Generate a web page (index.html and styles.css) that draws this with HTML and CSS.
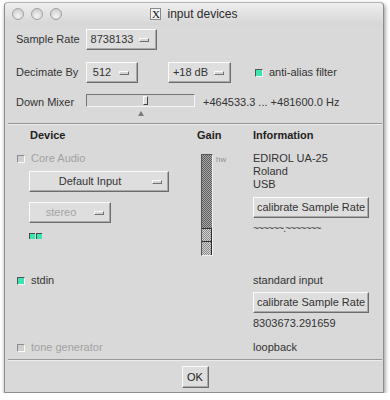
FILE: index.html
```html
<!DOCTYPE html>
<html>
<head>
<meta charset="utf-8">
<title>input devices</title>
<link rel="stylesheet" href="styles.css">
</head>
<body>
<div class="window">
  <div class="titlebar">
    <div class="lights"><span class="light"></span><span class="light"></span><span class="light"></span></div>
    <div class="title"><span class="x-icon">X</span><span>input devices</span></div>
    <div></div>
  </div>
  <div class="content">
    <div class="settings">
      <div class="row">
        <span class="label">Sample Rate</span>
        <div class="mb w-rate"><span class="mb-text">8738133</span><span class="ind"></span></div>
      </div>
      <div class="row row-gap">
        <span class="label">Decimate By</span>
        <div class="mb w-dec"><span class="mb-text">512</span><span class="ind"></span></div>
        <div class="mb w-db"><span class="mb-text">+18 dB</span><span class="ind"></span></div>
        <div class="check aa"><span class="box on"></span><span class="check-label">anti-alias filter</span></div>
      </div>
      <div class="row row-mixer">
        <span class="label lbl-mixer">Down Mixer</span>
        <div class="hslider">
          <div class="track"><span class="hthumb"></span></div>
          <span class="tri"></span>
        </div>
        <span class="hz">+464533.3 ... +481600.0 Hz</span>
      </div>
    </div>
    <div class="sep sep-top"></div>
    <div class="devices">
      <div class="device head">
        <span class="h h-device">Device</span>
        <span class="h">Gain</span>
        <span class="h">Information</span>
      </div>
      <div class="device dev1">
        <div class="col-left">
          <div class="check"><span class="box dis"></span><span class="check-label disabled">Core Audio</span></div>
          <div class="mb w-input"><span class="mb-text">Default Input</span><span class="ind"></span></div>
          <div class="mb w-stereo disabled-mb"><span class="mb-text">stereo</span><span class="ind"></span></div>
          <div class="meters"><span class="meter"></span><span class="meter"></span></div>
        </div>
        <div class="col-gain">
          <div class="vtrough"><div class="vfill"></div><div class="vthumb"></div></div>
          <span class="hw">hw</span>
        </div>
        <div class="col-info">
          <div class="line">EDIROL UA-25</div>
          <div class="line">Roland</div>
          <div class="line">USB</div>
          <div class="btn calib">calibrate Sample Rate</div>
          <div class="line tilde">~~~~~~.~~~~~~~</div>
        </div>
      </div>
      <div class="device dev2">
        <div class="col-left">
          <div class="check"><span class="box on"></span><span class="check-label">stdin</span></div>
        </div>
        <div></div>
        <div class="col-info">
          <div class="line">standard input</div>
          <div class="btn calib calib2">calibrate Sample Rate</div>
          <div class="line num">8303673.291659</div>
        </div>
      </div>
      <div class="device dev3">
        <div class="col-left">
          <div class="check"><span class="box dis"></span><span class="check-label disabled">tone generator</span></div>
        </div>
        <div></div>
        <div class="col-info">
          <div class="line">loopback</div>
        </div>
      </div>
    </div>
    <div class="sep sep-bottom"></div>
    <div class="footer"><div class="btn ok">OK</div></div>
  </div>
</div>
</body>
</html>
```

FILE: styles.css
```css
* { box-sizing: border-box; }

body {
  margin: 0;
  background: #ffffff;
  font-family: "Liberation Sans", Arial, sans-serif;
  font-size: 11px;
  line-height: 13px;
  color: #333333;
}

.window {
  margin: 2px 0 0 4px;
  width: 380px;
  background: #d9d9d9;
  border: 1px solid #8e8e8e;
  border-top-color: #b4b4b4;
  border-radius: 4px 4px 0 0;
  box-shadow: 1px 2px 4px rgba(0, 0, 0, 0.45);
}

.titlebar {
  height: 22px;
  display: grid;
  grid-template-columns: 1fr auto 1fr;
  align-items: center;
  background: linear-gradient(#eeeeee, #d6d6d6);
  border-radius: 4px 4px 0 0;
}

.lights {
  display: flex;
  gap: 7px;
  padding-left: 7px;
}

.light {
  width: 12px;
  height: 12px;
  border-radius: 50%;
  border: 1px solid #a2a2a2;
  background: radial-gradient(circle at 50% 70%, #f4f4f4 0, #dadada 55%, #c4c4c4 100%);
}

.title {
  display: flex;
  align-items: center;
  gap: 6px;
  font-size: 12px;
  color: #2a2a2a;
}

.x-icon {
  width: 11px;
  height: 12px;
  border: 1px solid #8a8a8a;
  background: #f2f2f2;
  font-family: "Liberation Serif", serif;
  font-size: 11px;
  line-height: 10px;
  text-align: center;
  color: #111;
}

.content {
  padding: 4px 0 4px 0;
}

.settings {
  padding-left: 11px;
}

.row {
  display: flex;
  align-items: center;
}

.row-gap { margin-top: 12px; }

.row-mixer {
  margin-top: 11px;
  align-items: flex-start;
}

.label {
  width: 70px;
  flex: none;
}

.lbl-mixer { margin-top: 2px; }

/* Tk style menubuttons and buttons */
.mb, .btn {
  background: #dedede;
  border: 1px solid;
  border-color: #fbfbfb #6c6c6c #6c6c6c #fbfbfb;
  box-shadow: inset -1px -1px 0 #a9a9a9;
  height: 21px;
}

.mb {
  display: flex;
  align-items: center;
  padding-left: 2px;
}

.mb-text {
  flex: 1;
  text-align: center;
  white-space: nowrap;
}

.ind {
  flex: none;
  width: 10px;
  height: 4px;
  margin: 0 6px 0 4px;
  border: 1px solid;
  border-color: #fbfbfb #707070 #707070 #fbfbfb;
  background: #d4d4d4;
}

.w-rate { width: 71px; }
.w-rate .ind { margin-right: 7px; }
.w-dec { width: 52px; }
.w-dec .ind { margin-right: 8px; }
.w-db { width: 63px; margin-left: 30px; }
.w-input { width: 140px; margin: 6px 0 0 12px; }
.w-stereo { width: 82px; margin: 10px 0 0 12px; }

.disabled-mb .mb-text { color: #a4a4a4; }

/* checkbuttons */
.check {
  display: flex;
  align-items: center;
  height: 13px;
}

.box {
  width: 8px;
  height: 8px;
  flex: none;
  border: 1px solid;
  border-color: #555 #f4f4f4 #f4f4f4 #555;
  background: #cfcfcf;
}

.box.on { background: #3be5b0; }

.box.dis {
  border-color: #8c8c8c #fafafa #fafafa #8c8c8c;
  background: #d0d0d0;
}

.check-label { margin-left: 6px; }

.disabled { color: #a2a2a2; }

.aa { margin-left: 24px; }

/* horizontal slider */
.hslider {
  display: flex;
  flex-direction: column;
  width: 109px;
}

.track {
  height: 13px;
  border: 1px solid;
  border-color: #767676 #f6f6f6 #f6f6f6 #767676;
  background: #d4d4d4;
  display: flex;
  align-items: center;
  padding-left: 56px;
}

.hthumb {
  width: 5px;
  height: 9px;
  border: 1px solid;
  border-color: #fbfbfb #444 #444 #fbfbfb;
  background: #dedede;
}

.tri {
  width: 0;
  height: 0;
  margin: 4px 0 0 52px;
  border-left: 3px solid transparent;
  border-right: 3px solid transparent;
  border-bottom: 5px solid #7a7a7a;
}

.hz {
  margin: 2px 0 0 8px;
  white-space: nowrap;
}

/* separators */
.sep {
  height: 2px;
  margin: 0 1px 0 3px;
  border-top: 1px solid #979797;
  border-bottom: 1px solid #ececec;
}

.sep-top { margin-top: 7px; }
.sep-bottom { margin-top: 5px; }

/* device table */
.devices {
  padding-left: 12px;
}

.device {
  display: grid;
  grid-template-columns: 180px 56px 1fr;
  align-items: start;
}

.head { margin-top: 4px; }

.h { font-weight: bold; color: #222; }
.h-device { padding-left: 13px; }

.dev1 { margin-top: 10px; }
.dev2 { margin-top: 18px; }
.dev3 { margin-top: 11px; }

.col-left {
  display: flex;
  flex-direction: column;
  align-items: flex-start;
}

.meters {
  display: flex;
  gap: 1px;
  margin: 10px 0 0 12px;
}

.meter {
  width: 6px;
  height: 6px;
  border-top: 1px solid #4a4a4a;
  border-left: 1px solid #4a4a4a;
  background: #3be5b0;
}

.col-gain {
  display: flex;
  align-items: flex-start;
  margin: 2px 0 0 4px;
}

.vtrough {
  width: 12px;
  height: 102px;
  border: 1px solid;
  border-color: #555 #f0f0f0 #f0f0f0 #555;
  display: flex;
  flex-direction: column;
}

.vfill {
  flex: 1;
  background: repeating-conic-gradient(#5e5e5e 0 25%, #a9a9a9 0 50%) 0 0 / 2px 2px;
}

.vthumb {
  height: 27px;
  border-top: 1px solid #2e2e2e;
  border-right: 1px solid #2e2e2e;
  background:
    linear-gradient(#2e2e2e, #2e2e2e) 0 12px / 100% 1px no-repeat,
    repeating-conic-gradient(#8c8c8c 0 25%, #d2d2d2 0 50%) 0 0 / 2px 2px;
}

.hw {
  margin: 2px 0 0 3px;
  font-size: 8px;
  line-height: 8px;
  color: #8e8e8e;
}

.col-info {
  display: flex;
  flex-direction: column;
  align-items: flex-start;
}

.line { height: 13px; white-space: nowrap; }

.btn {
  display: flex;
  align-items: center;
  justify-content: center;
  white-space: nowrap;
}

.calib {
  width: 116px;
  margin-top: 6px;
}

.calib2 { margin-top: 5px; }

.tilde {
  margin-top: 4px;
  font-size: 10px;
  letter-spacing: -0.8px;
  color: #444;
}

.num { margin-top: 4px; }

.footer {
  display: flex;
  justify-content: center;
  padding-top: 5px;
}

.ok {
  width: 27px;
  height: 22px;
  margin-left: 2px;
  color: #222;
}
```
